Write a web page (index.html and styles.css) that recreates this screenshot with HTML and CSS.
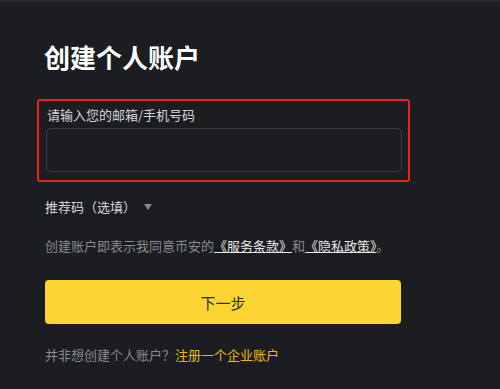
FILE: index.html
```html
<!DOCTYPE html>
<html lang="zh-CN">
<head>
    <meta charset="UTF-8">
    <meta name="viewport" content="width=device-width, initial-scale=1.0">
    <title>创建个人账户</title>
    <link rel="stylesheet" href="styles.css">
</head>
<body>

    <div class="container">
        <h1>创建个人账户</h1>

        <!-- Email / phone field, highlighted -->
        <div class="field-highlight">
            <label for="account">请输入您的邮箱/手机号码</label>
            <input type="text" id="account">
        </div>

        <div class="referral">
            推荐码（选填）<span class="caret"></span>
        </div>

        <p class="terms">创建账户即表示我同意币安的<a href="#">《服务条款》</a>和<a href="#">《隐私政策》</a>。</p>

        <button class="next-btn">下一步</button>

        <p class="alt">并非想创建个人账户？<a href="#">注册一个企业账户</a></p>
    </div>

</body>
</html>
```

FILE: styles.css
```css
body {
    margin: 0;
    background-color: #1c1d21;
    border-top: 2px solid #2a2b30;
    font-family: "Noto Sans CJK SC", "Noto Sans", sans-serif;
    color: #eaecef;
}

.container {
    width: 356px;
    padding: 36px 0 0 45px;
}

h1 {
    margin: 0 0 0 -1px;
    font-size: 26px;
    line-height: 38px;
    font-weight: bold;
    color: #ffffff;
}

.field-highlight {
    margin: 23px 0 0 -8px;
    width: 357px;
    padding: 5px 6px 8px 6px;
    border: 2px solid #e8241e;
    border-radius: 3px;
}

.field-highlight label {
    display: block;
    font-size: 13px;
    line-height: 18px;
    color: #d5d7db;
    margin-bottom: 4px;
    margin-left: 2px;
}

.field-highlight input {
    display: block;
    width: 356px;
    height: 44px;
    box-sizing: border-box;
    background: transparent;
    border: 1px solid #3b3c42;
    border-radius: 4px;
    color: #ffffff;
    font-size: 14px;
    padding: 0 10px;
    margin-left: 1px;
}

.referral {
    margin-top: 16px;
    font-size: 13px;
    line-height: 18px;
    color: #d5d7db;
    display: flex;
    align-items: center;
}

.caret {
    display: inline-block;
    margin-left: 8px;
    width: 0;
    height: 0;
    border-left: 4px solid transparent;
    border-right: 4px solid transparent;
    border-top: 6px solid #848a94;
}

.terms {
    margin: 21px 0 0;
    font-size: 13px;
    line-height: 18px;
    color: #868b94;
}

.terms a {
    color: #e6e8ea;
    text-decoration: underline;
}

.next-btn {
    display: block;
    margin-top: 25px;
    width: 356px;
    height: 44px;
    border: none;
    border-radius: 4px;
    background-color: #fcd535;
    color: #2b2b2b;
    font-family: inherit;
    font-size: 15px;
    cursor: pointer;
}

.alt {
    margin: 22px 0 0;
    font-size: 13px;
    line-height: 18px;
    color: #868b94;
}

.alt a {
    color: #f0b90b;
    text-decoration: none;
}
```
